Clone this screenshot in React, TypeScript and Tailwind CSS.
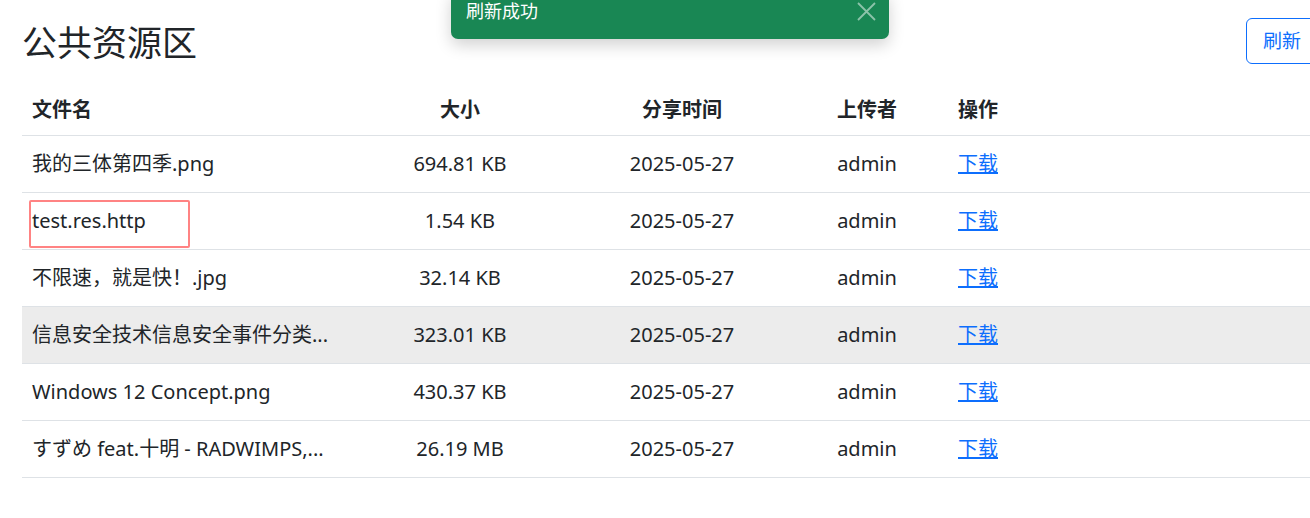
import React from "react";

const rows = [
  { name: "我的三体第四季.png", size: "694.81 KB" },
  { name: "test.res.http", size: "1.54 KB" },
  { name: "不限速，就是快！.jpg", size: "32.14 KB" },
  { name: "信息安全技术信息安全事件分类...", size: "323.01 KB", hover: true },
  { name: "Windows 12 Concept.png", size: "430.37 KB" },
  { name: "すずめ feat.十明 - RADWIMPS,...", size: "26.19 MB" },
];

const font = {
  fontFamily: '"Noto Sans", "Noto Sans CJK SC", sans-serif',
};

export default function App() {
  return (
    <div
      className="relative w-[1310px] h-[518px] overflow-hidden bg-white text-[#212529]"
      style={font}
    >
      <div className="w-[1340px] pl-[22px] pr-[22px]">
        <div className="flex items-start justify-between h-[85px]">
          <h2 className="mt-[22px] text-[35px] leading-[42px] font-normal">公共资源区</h2>
          <button className="mt-[18px] h-[46px] px-[16px] rounded-[6px] border border-[#0d6efd] text-[#0d6efd] text-[19px] leading-none bg-white">
            刷新
          </button>
        </div>
        <div className="w-[1296px]">
          <div className="grid grid-cols-[320px_236px_208px_162px_1fr] h-[51px] items-center border-b border-[#dee2e6] text-[20px] font-bold">
            <div className="pl-[10px]">文件名</div>
            <div className="text-center">大小</div>
            <div className="text-center">分享时间</div>
            <div className="text-center">上传者</div>
            <div className="pl-[10px]">操作</div>
          </div>
          {rows.map((r, i) => (
            <div
              key={i}
              className={`grid grid-cols-[320px_236px_208px_162px_1fr] h-[57px] items-center border-b border-[#dee2e6] text-[20px] ${
                r.hover ? "bg-[#ececec]" : "bg-white"
              }`}
            >
              <div className="pl-[10px] whitespace-nowrap overflow-hidden">{r.name}</div>
              <div className="text-center">{r.size}</div>
              <div className="text-center">2025-05-27</div>
              <div className="text-center">admin</div>
              <div className="pl-[10px]">
                <a href="#" className="text-[#0d6efd] underline">
                  下载
                </a>
              </div>
            </div>
          ))}
        </div>
      </div>

      {/* highlight box */}
      <div className="absolute left-[29px] top-[200px] w-[161px] h-[48px] border-2 border-[#ff8383] rounded-[2px] pointer-events-none" />

      {/* toast */}
      <div className="absolute left-[451px] top-[-10px] w-[438px] h-[49px] rounded-[7px] bg-[#198754] shadow-[0_6px_16px_rgba(0,0,0,0.18)]">
        <div className="absolute left-[15px] top-[9px] text-white text-[18px] leading-[24px]">刷新成功</div>
        <svg
          className="absolute left-[406px] top-[12px]"
          width="19"
          height="19"
          viewBox="0 0 19 19"
          fill="none"
          stroke="rgba(255,255,255,0.5)"
          strokeWidth="1.8"
        >
          <path d="M1 1L18 18M18 1L1 18" />
        </svg>
      </div>
    </div>
  );
}
